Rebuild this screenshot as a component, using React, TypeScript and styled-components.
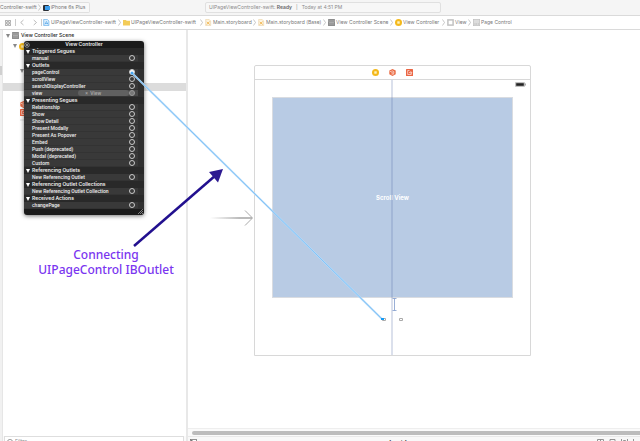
import React from 'react';
import styled, { createGlobalStyle } from 'styled-components';

const GlobalStyle = createGlobalStyle`
  * { box-sizing: border-box; }
  body { margin: 0; overflow: hidden; background: #fff; font-family: Inter, Roboto, sans-serif; font-size: 5px; line-height: 7px; color: #777; }
  button, input { font: inherit; color: inherit; background: none; border: 0; padding: 0; margin: 0; }
  svg { display: block; flex: none; }
`;

/* The footer bars run slightly past the bottom edge of the window. */
const Page = styled.div`
  position: relative;
  display: grid;
  grid-template-rows: 16px 14px 1fr;
  height: calc(100vh + 9px);
  overflow: hidden;
`;

const Toolbar = styled.header`
  display: grid;
  grid-template-columns: 205px minmax(0, 236fr) minmax(0, 199fr);
  align-items: center;
  background: #f5f5f5;
  border-bottom: 1px solid #dadada;
`;

const SchemeBar = styled.div`
  display: flex;
  align-items: center;
  width: 90px;
  height: 11px;
  gap: 2px;
  border: 1px solid #e0e0e0;
  border-left: 0;
  border-radius: 0 2px 2px 0;
  background: #f8f8f8;
  overflow: hidden;
`;

const SchemeButton = styled.button`
  display: flex;
  align-items: center;
  gap: 1px;
  white-space: nowrap;
`;

const StatusBox = styled.div`
  display: flex;
  align-items: center;
  height: 11px;
  gap: 4px;
  padding: 0 3px;
  border: 1px solid #e0e0e0;
  border-radius: 2px;
  background: #f7f7f7;
  color: #8b8b8b;
  white-space: nowrap;
  b { font-weight: 600; color: #666; }
`;

const Crumbs = styled.nav`
  display: flex;
  align-items: center;
  gap: 2px;
  padding-left: 5px;
  border-bottom: 1px solid #dadada;
  background: #fff;
  overflow: hidden;
`;

const NavTools = styled.div`
  display: flex;
  align-items: center;
  gap: 4px;
  width: 36px;
`;

const ToolButton = styled.button`
  display: grid;
  place-items: center;
  justify-self: start;
`;

const Crumb = styled.button<{ $w: number }>`
  display: flex;
  align-items: center;
  flex: none;
  width: ${p => p.$w}px;
  gap: 1px;
  white-space: nowrap;
`;

const Workspace = styled.main`
  display: grid;
  grid-template-columns: 3px 183px minmax(0, 1fr);
  min-height: 0;
`;

const Gutter = styled.div`
  padding-top: 36px;
  background: #f1f1f1;
  border-right: 1px solid #e6e6e6;
`;

const GutterMark = styled.div`
  height: 9px;
  background: #d0d0d0;
`;

const Outline = styled.aside`
  display: flex;
  flex-direction: column;
`;

const OutlineGroup = styled.div`
  margin-bottom: 1px;
`;

const OutlineRow = styled.div<{ $depth: number; $selected?: boolean }>`
  display: flex;
  align-items: center;
  gap: 2px;
  height: 8px;
  padding-left: ${p => 3 + p.$depth * 7}px;
  background: ${p => (p.$selected ? '#dcdcdc' : 'transparent')};
  color: #444;
`;

const SceneRow = styled(OutlineRow)`
  height: 11px;
  margin-bottom: 1px;
  color: #222;
  font-weight: 500;
`;

const FilterBar = styled.footer`
  height: 14px;
  margin-top: auto;
  padding: 0 2px 0 1px;
  background: #fafafa;
`;

const FilterField = styled.label`
  display: flex;
  align-items: center;
  gap: 2px;
  height: 11px;
  padding-left: 2px;
  border: 1px solid #dedede;
  background: #fff;
  input { width: 100%; outline: 0; }
  input::placeholder { color: #888; opacity: 1; }
`;

const Editor = styled.section`
  display: flex;
  flex-direction: column;
  min-width: 0;
  border-left: 2px solid #e8e8e8;
`;

const Canvas = styled.div`
  flex: 1;
  min-height: 0;
  padding: 35px 0 0 66px;
  overflow: hidden;
`;

const Device = styled.article`
  position: relative;
  width: 277px;
  border: 1px solid #d8d8d8;
  border-radius: 2px 2px 0 0;
`;

const SceneDock = styled.div`
  display: flex;
  align-items: center;
  justify-content: center;
  gap: 10px;
  height: 14px;
  border-bottom: 1px solid #d8d8d8;
`;

const Screen = styled.div`
  position: relative;
  height: 275px;
  padding: 2px 4px 0 17px;
`;

const StatusStrip = styled.div`
  display: flex;
  justify-content: flex-end;
  height: 15px;
`;

const ScrollArea = styled.div`
  display: grid;
  place-items: center;
  width: 241px;
  height: 201px;
  border: 1px solid #d9dce1;
  background: #b8cbe4;
  color: #fff;
  font-size: 6px;
  font-weight: 700;
`;

const CenterGuide = styled.div`
  position: absolute;
  top: 0;
  bottom: 0;
  left: calc(50% - 2px);
  width: 2px;
  background: rgba(90, 115, 170, 0.22);
`;

const ScrollTrack = styled.div`
  height: 8px;
  padding: 2px 0 2px 4px;
  border-top: 1px solid #eee;
  background: #fafafa;
`;

const ScrollThumb = styled.div`
  height: 4px;
  border-radius: 2px 0 0 2px;
  background: #bcbcbc;
`;

const EditorFooter = styled.footer`
  display: grid;
  grid-template-columns: 1fr auto 1fr;
  align-items: start;
  height: 14px;
  padding: 2px 0 0 2px;
  border-top: 1px solid #e8e8e8;
  background: #f8f8f8;
  color: #333;
  > :last-child { justify-self: end; }
`;

const SizeClass = styled.button`
  display: flex;
  gap: 3px;
  padding-right: 32px;
  font-weight: 500;
`;

const FooterTools = styled.div`
  display: flex;
  gap: 5px;
`;

/* Floating connections panel */
const Hud = styled.section`
  position: absolute;
  top: 41px;
  left: 24px;
  width: 120px;
  overflow: hidden;
  border-radius: 3px;
  background: #1b1b1b;
  box-shadow: 0 1px 4px rgba(0, 0, 0, 0.55);
  color: #efefef;
`;

const HudTitle = styled.header`
  display: grid;
  grid-template-columns: 7px 1fr 7px;
  align-items: center;
  height: 7px;
  text-align: center;
  font-weight: 600;
`;

const HudHeading = styled.h2`
  display: flex;
  align-items: center;
  gap: 2px;
  height: 7px;
  margin: 0;
  padding-left: 2px;
  background: #292929;
  font-size: 5px;
  font-weight: 600;
  white-space: nowrap;
`;

const HudRows = styled.div`
  margin-right: 6px;
  box-shadow: 6px 0 0 #303030;
`;

const HudRow = styled.div<{ $linked?: boolean }>`
  display: flex;
  align-items: center;
  justify-content: space-between;
  height: 7px;
  padding: 0 3px 0 8px;
  background: ${p => (p.$linked ? '#494949' : '#393939')};
  border-bottom: 1px solid #333;
  font-family: Roboto, sans-serif;
  font-weight: 500;
  line-height: 6px;
  white-space: nowrap;
`;

const Target = styled.span`
  flex: 1;
  margin-left: 36px;
  padding-left: 7px;
  border-radius: 3px;
  background: #606060;
  color: #aaa;
`;

const Port = styled.button<{ $state?: 'active' | 'linked' }>`
  flex: none;
  width: 6px;
  height: 6px;
  border: 1px solid ${p => (p.$state === 'linked' ? '#999' : '#c8c8c8')};
  border-radius: 50%;
  background: ${p => (p.$state === 'active' ? '#fff' : p.$state === 'linked' ? '#777' : 'transparent')};
`;

const HudFooter = styled.footer`
  display: flex;
  align-items: flex-end;
  justify-content: flex-end;
  height: 6px;
  padding: 0 1px 1px 0;
`;

const Annotation = styled.p`
  position: absolute;
  top: 247px;
  left: 26px;
  width: 160px;
  margin: 0;
  color: #7a35f0;
  font-family: 'Noto Sans', sans-serif;
  font-size: 12px;
  font-weight: 500;
  line-height: 15px;
  text-align: center;
`;

const Overlay = styled.svg`
  position: absolute;
  top: 0;
  left: 0;
  pointer-events: none;
`;

const Triangle = ({ color = '#888' }: { color?: string }) => (
  <svg width="4" height="4" viewBox="0 0 4 4"><path d="M0 0h4L2 4z" fill={color} /></svg>
);

const Chevron = ({ back = false }: { back?: boolean }) => (
  <svg width="4" height="7" viewBox="0 0 4 7" fill="none" stroke="#a9a9a9" strokeWidth="0.8">
    <path d={back ? 'M3.5 1L.7 3.5 3.5 6' : 'M.7 1l2.8 2.5L.7 6'} />
  </svg>
);

const Separator = () => (
  <svg width="3" height="7" viewBox="0 0 3 7" fill="none" stroke="#b0b0b0" strokeWidth="0.7"><path d="M.5.5l2 3-2 3" /></svg>
);

type IconKind = 'project' | 'folder' | 'story' | 'scene' | 'controller' | 'view' | 'page' | 'responder' | 'exit';

const Icon = ({ kind }: { kind: IconKind }) => (
  <svg width="7" height="7" viewBox="0 0 7 7">
    {kind === 'project' && <><path d="M.7.4h3.6L5.9 2v4.6H.7z" fill="#dceffd" stroke="#62ace8" strokeWidth=".7" /><path d="M1.8 5.4l1.6-3 1.6 3M2 4.5h3" stroke="#4b9fe5" strokeWidth=".6" fill="none" /></>}
    {kind === 'folder' && <path d="M0 1h3l.6.8H7v4.7H0z" fill="#f3cc58" />}
    {kind === 'story' && <><path d="M.7.4h3.4L5.7 2v4.6h-5z" fill="#fdf4e0" stroke="#e8cfa0" strokeWidth=".6" /><path d="M1.8 5.5l2.8-3M1.8 3l3 2.5" stroke="#f0ad3f" strokeWidth=".8" /></>}
    {kind === 'scene' && <><rect width="7" height="7" rx=".5" fill="#8d8d8d" /><path d="M0 2h7M1 3.5h5M1 5h5" stroke="#bdbdbd" strokeWidth=".6" /></>}
    {kind === 'controller' && <><circle cx="3.5" cy="3.5" r="3.5" fill="#f4b91c" /><rect x="2.3" y="2.3" width="2.4" height="2.4" fill="#fff2be" /></>}
    {kind === 'view' && <rect x=".9" y=".9" width="5.2" height="5.2" fill="#fff" stroke="#c2c2c2" strokeWidth="1.5" />}
    {kind === 'page' && <><rect x=".3" y=".3" width="6.4" height="6.4" fill="#ddd" stroke="#bbb" strokeWidth=".6" /><path d="M1.5 5h1M3.2 5h1M5 5h.8" stroke="#aaa" strokeWidth=".8" /></>}
    {kind === 'responder' && <><path d="M3.5 0L6.7 1.6v3.7L3.5 7 .3 5.3V1.6z" fill="#ea6a42" /><path d="M.8 2.2l2.4 1V6M2.8 1.6l2 1v1.5M4.6 3.8v1.7" stroke="#fff" strokeWidth=".6" fill="none" /></>}
    {kind === 'exit' && <><rect width="7" height="7" rx=".5" fill="#ea6543" /><path d="M3.5 1.5H1.7v4h3.6V4.2M3 3.6h2.6M4.5 2.2l1.4 1.4-1.4 1.3" stroke="#fff" strokeWidth=".6" fill="none" /></>}
  </svg>
);

const crumbs: { kind: IconKind; label: string; w: number }[] = [
  { kind: 'project', label: 'UIPageViewController-swift', w: 73 },
  { kind: 'folder', label: 'UIPageViewController-swift', w: 75 },
  { kind: 'story', label: 'Main.storyboard', w: 46 },
  { kind: 'story', label: 'Main.storyboard (Base)', w: 63 },
  { kind: 'scene', label: 'View Controller Scene', w: 60 },
  { kind: 'controller', label: 'View Controller', w: 45 },
  { kind: 'view', label: 'View', w: 19 },
  { kind: 'page', label: 'Page Control', w: 45 },
];

const sections: { title: string; rows: string[] }[] = [
  { title: 'Triggered Segues', rows: ['manual'] },
  { title: 'Outlets', rows: ['pageControl', 'scrollView', 'searchDisplayController', 'view'] },
  { title: 'Presenting Segues', rows: ['Relationship', 'Show', 'Show Detail', 'Present Modally', 'Present As Popover', 'Embed', 'Push (deprecated)', 'Modal (deprecated)', 'Custom'] },
  { title: 'Referencing Outlets', rows: ['New Referencing Outlet'] },
  { title: 'Referencing Outlet Collections', rows: ['New Referencing Outlet Collection'] },
  { title: 'Received Actions', rows: ['changePage'] },
];

const layoutTools = [
  { name: 'Stack', d: 'M.5.5h6v5h-6zM3.5.5v5M.5 3h6' },
  { name: 'Align', d: 'M1 .5h5v5H1zM1 2.5h5' },
  { name: 'Pin', d: 'M.5 0v6M6.5 0v6M2.5 1.5h2v3h-2z' },
  { name: 'Resolve', d: 'M.5 0v6M3 6l2-4 2 4z' },
];

const ConnectionsPanel = () => (
  <Hud aria-label="Connections">
    <HudTitle>
      <ToolButton aria-label="Close">
        <svg width="6" height="6" viewBox="0 0 6 6" fill="none" stroke="#bbb" strokeWidth=".7"><circle cx="3" cy="3" r="2.3" /><path d="M2 2l2 2M4 2L2 4" /></svg>
      </ToolButton>
      View Controller
    </HudTitle>
    {sections.map(s => (
      <React.Fragment key={s.title}>
        <HudHeading><Triangle color="#fff" />{s.title}</HudHeading>
        <HudRows>
          {s.rows.map(r => (
            <HudRow key={r} $linked={r === 'view'}>
              {r}
              {r === 'view' && <Target>× &nbsp;View</Target>}
              <Port aria-label={`Connect ${r}`} $state={r === 'pageControl' ? 'active' : r === 'view' ? 'linked' : undefined} />
            </HudRow>
          ))}
        </HudRows>
      </React.Fragment>
    ))}
    <HudFooter>
      <svg width="5" height="5" viewBox="0 0 5 5" stroke="#aaa" strokeWidth=".7"><path d="M0 5l5-5M2 5l3-3M4 5l1-1" /></svg>
    </HudFooter>
  </Hud>
);

export default function App() {
  return (
    <>
      <GlobalStyle />
      <Page>
        <Toolbar>
          <SchemeBar>
            <SchemeButton>Controller-swift<Separator /></SchemeButton>
            <SchemeButton>
              <svg width="7" height="6" viewBox="0 0 7 6"><rect width="6" height="6" rx="1" fill="#2b2f36" /><rect x="2" y="1" width="5" height="4" fill="#3c9eed" /></svg>
              iPhone 6s Plus
            </SchemeButton>
          </SchemeBar>
          <StatusBox><span>UIPageViewController-swift: <b>Ready</b></span><span>|</span><span>Today at 4:51 PM</span></StatusBox>
        </Toolbar>

        <Crumbs aria-label="Jump bar">
          <NavTools>
            <ToolButton aria-label="Related items">
              <svg width="6" height="6" viewBox="0 0 6 6" fill="none" stroke="#888" strokeWidth=".7"><path d="M.4.4h2v2h-2zM3.6.4h2v2h-2zM.4 3.6h2v2h-2zM3.6 3.6h2v2h-2z" /></svg>
            </ToolButton>
            <svg width="1" height="7"><path d="M.5 0v7" stroke="#ccc" /></svg>
            <ToolButton aria-label="Back"><Chevron back /></ToolButton>
            <svg width="1" height="7" />
            <ToolButton aria-label="Forward"><Chevron /></ToolButton>
            <svg width="1" height="7"><path d="M.5 0v7" stroke="#ccc" /></svg>
          </NavTools>
          {crumbs.map((c, i) => (
            <React.Fragment key={i}>
              {i > 0 && <Separator />}
              <Crumb $w={c.w}><Icon kind={c.kind} />{c.label}</Crumb>
            </React.Fragment>
          ))}
        </Crumbs>

        <Workspace>
          <Gutter><GutterMark /></Gutter>
          <Outline aria-label="Document outline">
            <SceneRow $depth={0}><Triangle /><Icon kind="scene" />View Controller Scene</SceneRow>
            <OutlineGroup>
              <OutlineRow $depth={1}><Triangle /><Icon kind="controller" /></OutlineRow>
              <OutlineRow $depth={3} />
              <OutlineRow $depth={3} />
            </OutlineGroup>
            <OutlineGroup>
              <OutlineRow $depth={2}><Triangle /></OutlineRow>
              <OutlineRow $depth={3} />
              <OutlineRow $depth={3} $selected />
            </OutlineGroup>
            <OutlineGroup>
              <OutlineRow $depth={3} />
              <OutlineRow $depth={2}><Icon kind="responder" /></OutlineRow>
              <OutlineRow $depth={2}><Icon kind="exit" /></OutlineRow>
              <OutlineRow $depth={2}>
                <svg width="7" height="2"><path d="M0 1h7" stroke="#ddd" /></svg>
              </OutlineRow>
            </OutlineGroup>
            <FilterBar>
              <FilterField>
                <svg width="6" height="6" viewBox="0 0 6 6"><circle cx="3" cy="3" r="2.6" fill="none" stroke="#777" strokeWidth=".7" /><path d="M1.5 2h3L3 4.5z" fill="#555" /></svg>
                <input aria-label="Filter" placeholder="Filter" />
              </FilterField>
            </FilterBar>
          </Outline>

          <Editor>
            <Canvas>
              <Device>
                <SceneDock><Icon kind="controller" /><Icon kind="responder" /><Icon kind="exit" /></SceneDock>
                <Screen>
                  <StatusStrip>
                    <svg width="11" height="5" viewBox="0 0 11 5"><rect x=".4" y=".4" width="9.2" height="4.2" rx=".7" fill="#ccc" stroke="#999" strokeWidth=".5" /><path d="M1.2 1.2h7.6v2.6H1.2z" fill="#222" /><path d="M10.4 1.5v2" stroke="#888" strokeWidth=".8" /></svg>
                  </StatusStrip>
                  <ScrollArea>Scroll View</ScrollArea>
                  <CenterGuide />
                </Screen>
              </Device>
            </Canvas>
            <ScrollTrack><ScrollThumb /></ScrollTrack>
            <EditorFooter>
              <ToolButton aria-label="Toggle outline">
                <svg width="7" height="6" viewBox="0 0 7 6"><rect x=".5" y=".5" width="6" height="5" fill="#fff" stroke="#777" strokeWidth=".8" /><path d="M1 1h1.5v4H1z" fill="#777" /></svg>
              </ToolButton>
              <SizeClass><span>wAny</span><span>hAny</span></SizeClass>
              <FooterTools>
                {layoutTools.map(t => (
                  <ToolButton key={t.name} aria-label={t.name}>
                    <svg width="7" height="6" viewBox="0 0 7 6" fill="none" stroke="#888" strokeWidth=".9"><path d={t.d} /></svg>
                  </ToolButton>
                ))}
              </FooterTools>
            </EditorFooter>
          </Editor>
        </Workspace>

        <ConnectionsPanel />
        <Annotation>Connecting<br />UIPageControl IBOutlet</Annotation>
        <Overlay width="640" height="441" viewBox="0 0 640 441" fill="none">
          <defs>
            <linearGradient id="entry" gradientUnits="userSpaceOnUse" x1="210" y1="0" x2="252" y2="0">
              <stop offset="0" stopColor="#aaa" stopOpacity="0" /><stop offset=".7" stopColor="#aaa" />
            </linearGradient>
          </defs>
          <path d="M210 217h42v2h-42z" fill="url(#entry)" opacity=".8" />
          <path d="M245 210.5l7.5 7.5-7.5 7.5" stroke="#aaa" />
          <path d="M394.5 298.5v12M392.5 298.5h4M392.5 310.5h4" stroke="#7f9acb" strokeWidth=".8" />
          <path d="M382.5 318.5h3v2h-3zM399.5 318.5h3v2h-3z" stroke="#aaa" />
          <path d="M132 73L382 319" stroke="#b5dbfb" strokeWidth="1.8" />
          <path d="M132 73L382 319" stroke="#6bb8f4" strokeWidth=".7" />
          <circle cx="132" cy="73" r="1.5" fill="#47a7f2" />
          <rect x="381" y="318" width="3" height="2" fill="#139bf5" />
          <path d="M134 246L216 175" stroke="#22108f" strokeWidth="2.5" />
          <path d="M223 169l-5 13.5-9-10.5z" fill="#2d1a91" />
        </Overlay>
      </Page>
    </>
  );
}
